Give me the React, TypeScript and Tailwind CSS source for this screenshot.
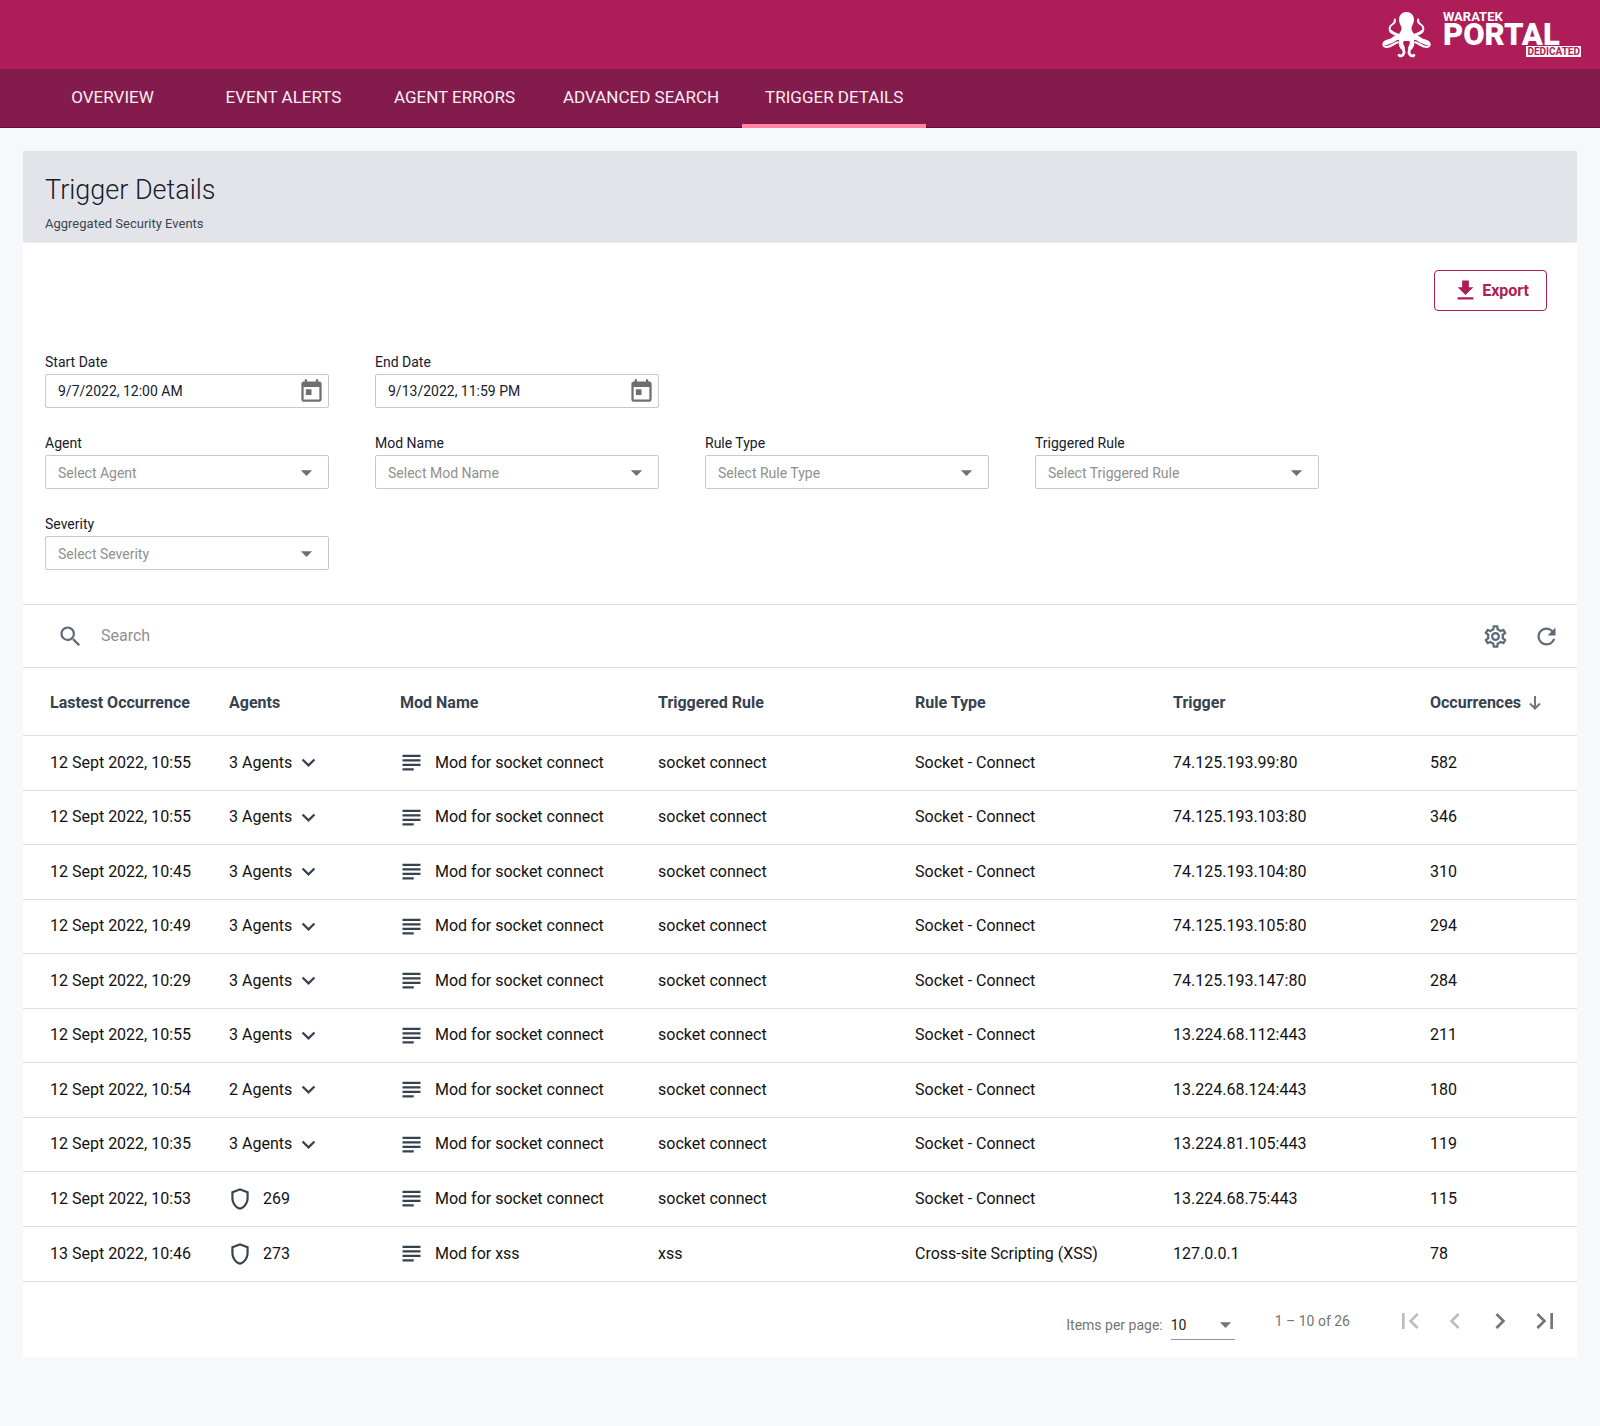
import type { ReactNode } from "react";
import {
  MdArrowDropDown,
  MdChevronLeft,
  MdChevronRight,
  MdExpandMore,
  MdFirstPage,
  MdGetApp,
  MdLastPage,
  MdOutlineSettings,
  MdOutlineShield,
  MdRefresh,
  MdSearch,
  MdSubject,
  MdToday,
} from "react-icons/md";

const tabs = ["OVERVIEW", "EVENT ALERTS", "AGENT ERRORS", "ADVANCED SEARCH", "TRIGGER DETAILS"];

type Row = {
  date: string;
  agents?: number;
  agentId?: string;
  mod: string;
  rule: string;
  type: string;
  trigger: string;
  count: number;
};

const socket = { mod: "Mod for socket connect", rule: "socket connect", type: "Socket - Connect" };

const rows: Row[] = [
  { date: "12 Sept 2022, 10:55", agents: 3, ...socket, trigger: "74.125.193.99:80", count: 582 },
  { date: "12 Sept 2022, 10:55", agents: 3, ...socket, trigger: "74.125.193.103:80", count: 346 },
  { date: "12 Sept 2022, 10:45", agents: 3, ...socket, trigger: "74.125.193.104:80", count: 310 },
  { date: "12 Sept 2022, 10:49", agents: 3, ...socket, trigger: "74.125.193.105:80", count: 294 },
  { date: "12 Sept 2022, 10:29", agents: 3, ...socket, trigger: "74.125.193.147:80", count: 284 },
  { date: "12 Sept 2022, 10:55", agents: 3, ...socket, trigger: "13.224.68.112:443", count: 211 },
  { date: "12 Sept 2022, 10:54", agents: 2, ...socket, trigger: "13.224.68.124:443", count: 180 },
  { date: "12 Sept 2022, 10:35", agents: 3, ...socket, trigger: "13.224.81.105:443", count: 119 },
  { date: "12 Sept 2022, 10:53", agentId: "269", ...socket, trigger: "13.224.68.75:443", count: 115 },
  {
    date: "13 Sept 2022, 10:46",
    agentId: "273",
    mod: "Mod for xss",
    rule: "xss",
    type: "Cross-site Scripting (XSS)",
    trigger: "127.0.0.1",
    count: 78,
  },
];

/* One side of the octopus; the other side is its mirror image. */
function Tentacles() {
  return (
    <g strokeLinecap="round" strokeLinejoin="round">
      <path strokeWidth="2" d="M12.800 7.500c.8 2.500-.6 3.800-2.600 5-2.600 1.600-3.400 4.400-1.600 6.700 1.800 2.200 4.800 2.600 8.400 4.800" />
      <path strokeWidth="3" d="M9 19.500c1.800 2 5 2.700 9 4.500" />
      <path strokeWidth="4.800" d="M19 25.500c-4.500-.8-6.500.8-8.500 2.600-1.800 1.500-4.500 1.400-6.800 2.700" />
      <path strokeWidth="2.200" d="M2.600 30.500c-2 1.500-1.500 4.300 1.500 4.500 4.500.2 7-3 11.500-4.700" />
      <path strokeWidth="4.600" d="M20.500 26c-2.500 4-1.800 7 0 9.500" />
      <path strokeWidth="2.800" d="M20.300 35c2 3.500 2.300 6.300.5 8-1.100 1-2.700 1-3.700.3" />
    </g>
  );
}

function Octopus() {
  return (
    <svg viewBox="0 0 49 46" className="h-[46px] w-[49px]" fill="none" stroke="#fff" aria-hidden="true">
      <path
        fill="#fff"
        stroke="none"
        d="M24.500 0c-4.400 0-7.500 3.200-7.500 7.500 0 3.400 1.600 5.600 2.300 7.500.6 1.800 0 3.600-1.300 5.500L14.500 25l4 4h12l4-4-3.500-4.500c-1.300-1.900-1.900-3.700-1.300-5.500.7-1.900 2.300-4.100 2.300-7.500C32 3.200 28.900 0 24.500 0z"
      />
      <Tentacles />
      <g transform="translate(49 0) scale(-1 1)">
        <Tentacles />
      </g>
    </svg>
  );
}

function Logo() {
  return (
    <div className="flex items-start gap-3 text-white">
      <Octopus />
      <div className="relative w-[138px]">
        <div className="text-[13px] font-bold leading-[9px]">WARATEK</div>
        <div className="text-[31px] font-black leading-[27px]">PORTAL</div>
        <div className="absolute right-0 top-[34px] bg-white px-px text-[10px] font-bold leading-[11px] text-[#ae1d58]">DEDICATED</div>
      </div>
    </div>
  );
}

function Label({ id, children }: { id: string; children: ReactNode }) {
  return (
    <label htmlFor={id} className="block pt-0.5 text-sm leading-6 text-[#15202b]">
      {children}
    </label>
  );
}

function DateField({ id, label, value }: { id: string; label: string; value: string }) {
  return (
    <div>
      <Label id={id}>{label}</Label>
      <div className="flex h-[34px] items-center rounded-xs border border-[#c9c9c9] pl-3 pr-[3px]">
        <input id={id} defaultValue={value} className="min-w-0 flex-1 text-sm text-[#15202b] outline-none" />
        <button type="button" aria-label={`Choose ${label}`} className="text-[#6f6f6f]">
          <MdToday size={27} />
        </button>
      </div>
    </div>
  );
}

function SelectField({ id, label }: { id: string; label: string }) {
  return (
    <div>
      <Label id={id}>{label}</Label>
      <div className="relative">
        <select
          id={id}
          className="h-[34px] w-full appearance-none rounded-xs border border-[#c9c9c9] bg-white pl-3 pr-9 pt-0.5 text-sm text-[#909090]"
        >
          <option>Select {label}</option>
        </select>
        <MdArrowDropDown size={27} className="pointer-events-none absolute right-[9px] top-1 text-[#6f6f6f]" />
      </div>
    </div>
  );
}

function AgentsCell({ row }: { row: Row }) {
  if (row.agentId) {
    return (
      <div className="flex items-center gap-[10px]">
        <MdOutlineShield size={26} className="-ml-0.5 text-[#36424f]" />
        {row.agentId}
      </div>
    );
  }
  return (
    <button type="button" className="flex items-center gap-[3px]">
      {row.agents} Agents
      <MdExpandMore size={27} className="text-[#36424f]" />
    </button>
  );
}

export default function App() {
  return (
    <div className="min-h-screen bg-[#f6f8fa] pb-[69px] font-['Roboto',sans-serif] text-[#111]">
      <header>
        <div className="flex h-[69px] justify-end bg-[#ae1d58] pr-[19px] pt-3">
          <Logo />
        </div>
        <nav className="flex h-[59px] border-b border-[#78003f] bg-[#831c4d] pl-[27px]">
          {tabs.map((tab) => (
            <a
              key={tab}
              href="#"
              aria-current={tab === "TRIGGER DETAILS" ? "page" : undefined}
              className="-mb-px flex min-w-[171px] items-center justify-center border-b-4 border-transparent px-[23px] pt-[3px] text-[17px] text-[#f7eef2] aria-[current=page]:border-[#ff85a2]"
            >
              {tab}
            </a>
          ))}
        </nav>
      </header>

      <main className="mx-[23px] mt-[23px] bg-white">
        <div className="h-[92px] border-b border-[#ececee] bg-[#e3e4ea] px-[22px] pt-[21px]">
          <h1 className="text-[27px] font-light leading-9 text-[#15202b]">Trigger Details</h1>
          <p className="text-[13px] leading-8 text-[#3a444f]">Aggregated Security Events</p>
        </div>

        <div className="flex justify-end pr-[30px] pt-[27px]">
          <button
            type="button"
            className="flex h-[41px] items-center gap-[3px] rounded border border-[#ae1d58] px-[17px] text-base font-bold text-[#ae1d58]"
          >
            <MdGetApp size={27} />
            Export
          </button>
        </div>

        <form className="grid grid-cols-[repeat(4,284px)] gap-x-[46px] gap-y-[21px] px-[22px] pb-[34px] pt-[37px]">
          <DateField id="start" label="Start Date" value="9/7/2022, 12:00 AM" />
          <div className="col-span-3 w-[284px]">
            <DateField id="end" label="End Date" value="9/13/2022, 11:59 PM" />
          </div>
          <SelectField id="agent" label="Agent" />
          <SelectField id="mod" label="Mod Name" />
          <SelectField id="type" label="Rule Type" />
          <SelectField id="rule" label="Triggered Rule" />
          <SelectField id="severity" label="Severity" />
        </form>

        <div className="flex h-[64px] items-center border-y border-[#dedede] pl-[34px] pr-[17px] text-[#5f6b75]">
          <MdSearch size={27} />
          <input
            type="search"
            aria-label="Search"
            placeholder="Search"
            className="ml-[17px] flex-1 text-base outline-none placeholder:text-[#8f8f8f]"
          />
          <button type="button" aria-label="Settings" className="mr-6">
            <MdOutlineSettings size={27} />
          </button>
          <button type="button" aria-label="Refresh">
            <MdRefresh size={27} />
          </button>
        </div>

        <table className="w-full table-fixed text-left text-base">
          <colgroup>
            <col className="w-[206px]" />
            <col className="w-[171px]" />
            <col className="w-[258px]" />
            <col className="w-[257px]" />
            <col className="w-[258px]" />
            <col className="w-[257px]" />
            <col className="w-[147px]" />
          </colgroup>
          <thead>
            <tr className="h-[67px] border-b border-[#dedede] text-[#36424f]">
              <th className="pl-[27px] pt-1">Lastest Occurrence</th>
              <th className="pt-1">Agents</th>
              <th className="pt-1">Mod Name</th>
              <th className="pt-1">Triggered Rule</th>
              <th className="pt-1">Rule Type</th>
              <th className="pt-1">Trigger</th>
              <th className="pt-1" aria-sort="descending">
                <button type="button" className="flex items-center gap-2">
                  Occurrences
                  <svg viewBox="0 0 12 14" className="h-[14px] w-3 text-[#757575]" fill="none" stroke="currentColor" strokeWidth="2" aria-hidden="true">
                    <path d="M6 0v12M1 7.500l5 5 5-5" />
                  </svg>
                </button>
              </th>
            </tr>
          </thead>
          <tbody>
            {rows.map((row) => (
              <tr key={row.trigger} className="h-[55px] border-b border-[#dedede] even:not-last:h-[54px]">
                <td className="pl-[27px]">{row.date}</td>
                <td>
                  <AgentsCell row={row} />
                </td>
                <td>
                  <div className="flex items-center gap-[10px]">
                    <MdSubject size={27} className="-ml-0.5 text-[#36424f]" />
                    {row.mod}
                  </div>
                </td>
                <td>{row.rule}</td>
                <td>{row.type}</td>
                <td>{row.trigger}</td>
                <td>{row.count}</td>
              </tr>
            ))}
          </tbody>
        </table>

        <div className="flex h-[75px] items-center justify-end pr-4 pt-1 text-sm text-[#757575]">
          <label htmlFor="page-size" className="pt-2">
            Items per page:
          </label>
          <div className="relative ml-2 mt-2 w-16 border-b border-[#949494]">
            <select id="page-size" className="h-7 w-full appearance-none text-sm text-[#212121]">
              <option>10</option>
            </select>
            <MdArrowDropDown size={27} className="pointer-events-none absolute -right-1 top-0" />
          </div>
          <span className="ml-10">1 – 10 of 26</span>
          <div className="ml-11 flex gap-[13px]">
            <button type="button" aria-label="First page" disabled className="text-[#bdbdbd]">
              <MdFirstPage size={32} />
            </button>
            <button type="button" aria-label="Previous page" disabled className="text-[#bdbdbd]">
              <MdChevronLeft size={32} />
            </button>
            <button type="button" aria-label="Next page">
              <MdChevronRight size={32} />
            </button>
            <button type="button" aria-label="Last page">
              <MdLastPage size={32} />
            </button>
          </div>
        </div>
      </main>
    </div>
  );
}
